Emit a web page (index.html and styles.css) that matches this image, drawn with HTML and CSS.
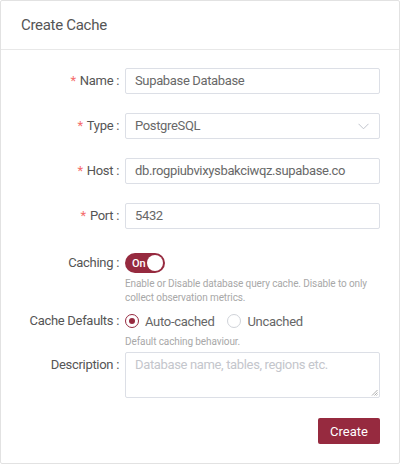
FILE: index.html
```html
<!DOCTYPE html>
<html>
<head>
<meta charset="utf-8">
<link rel="stylesheet" href="styles.css">
</head>
<body>
<div class="card">
  <div class="card-header">Create Cache</div>
  <form class="card-body">
    <div class="row">
      <label class="label"><span class="req">*</span>Name :</label>
      <div class="control"><div class="input">Supabase Database</div></div>
    </div>
    <div class="row">
      <label class="label"><span class="req">*</span>Type :</label>
      <div class="control">
        <div class="input select">PostgreSQL
          <svg class="chev" width="11" height="7" viewBox="0 0 11 7"><path d="M0.5 0.8 L5.5 5.8 L10.5 0.8" fill="none" stroke="#c0c4cc" stroke-width="1"/></svg>
        </div>
      </div>
    </div>
    <div class="row">
      <label class="label"><span class="req">*</span>Host :</label>
      <div class="control"><div class="input">db.rogpiubvixysbakciwqz.supabase.co</div></div>
    </div>
    <div class="row">
      <label class="label"><span class="req">*</span>Port :</label>
      <div class="control"><div class="input">5432</div></div>
    </div>
    <div class="row row-help">
      <label class="label">Caching :</label>
      <div class="control">
        <div class="line">
          <span class="switch"><span class="switch-text">On</span><span class="knob"></span></span>
        </div>
        <div class="help">Enable or Disable database query cache. Disable to only collect observation metrics.</div>
      </div>
    </div>
    <div class="row row-help2">
      <label class="label">Cache Defaults :</label>
      <div class="control">
        <div class="line radios">
          <span class="radio"><span class="dot on"></span>Auto-cached</span>
          <span class="radio"><span class="dot"></span>Uncached</span>
        </div>
        <div class="help">Default caching behaviour.</div>
      </div>
    </div>
    <div class="row row-desc">
      <label class="label">Description :</label>
      <div class="control">
        <div class="textarea">Database name, tables, regions etc.
          <svg class="grip" width="7" height="7" viewBox="0 0 7 7"><path d="M6.5 1 L1 6.5 M6.5 3.5 L3.5 6.5 M6.5 5.5 L5.5 6.5" stroke="#999" stroke-width="0.8"/></svg>
        </div>
      </div>
    </div>
    <div class="actions">
      <button type="button" class="btn">Create</button>
    </div>
  </form>
</div>
</body>
</html>
```
FILE: styles.css
```css
* { box-sizing: border-box; }
html, body { margin: 0; padding: 0; background: #ffffff; }
body {
  font-family: Roboto, "Liberation Sans", sans-serif;
  color: #5c5c5c;
}
.card {
  width: 400px;
  height: 464px;
  border: 1px solid #e2e2e2;
  border-radius: 2px;
  background: #fff;
}
.card-header {
  height: 49px;
  border-bottom: 1px solid #e8e8e8;
  padding-left: 20px;
  display: flex;
  align-items: center;
  font-size: 15px;
  letter-spacing: -0.3px;
  color: #555;
  padding-bottom: 1px;
}
.card-body {
  margin: 0;
  padding: 18px 19px 18px 0;
}
.row {
  display: flex;
  align-items: flex-start;
  margin-bottom: 19px;
}
.label {
  width: 118px;
  flex: none;
  height: 26px;
  line-height: 26px;
  text-align: right;
  font-size: 13px;
  letter-spacing: -0.3px;
  color: #555;
  white-space: nowrap;
}
.req {
  color: #f56c6c;
  margin-right: 4px;
}
.control {
  flex: 1;
  margin-left: 6px;
}
.input {
  position: relative;
  height: 26px;
  border: 1px solid #dcdfe6;
  border-radius: 2px;
  padding: 0 9px;
  line-height: 24px;
  font-size: 13px;
  letter-spacing: -0.35px;
  color: #686868;
  white-space: nowrap;
}
.chev {
  position: absolute;
  right: 10px;
  top: 9px;
}
.row-help { padding-top: 2px; margin-bottom: 3px; }
.line {
  height: 26px;
  display: flex;
  align-items: center;
}
.switch {
  width: 40px;
  height: 20px;
  border-radius: 10px;
  background: #962a3f;
  display: flex;
  align-items: center;
  justify-content: space-between;
  padding: 0 2px 0 7px;
}
.switch-text {
  color: #fff;
  font-size: 11px;
  font-weight: 500;
}
.knob {
  width: 16px;
  height: 16px;
  border-radius: 50%;
  background: #fff;
}
.help {
  font-size: 10px;
  line-height: 14px;
  color: #a8a8a8;
  letter-spacing: -0.1px;
  padding-right: 0;
  margin-top: 1px;
}
.row-help2 { margin-bottom: 3px; }
.radios { gap: 13px; font-size: 13px; letter-spacing: -0.3px; color: #666; }
.radio { display: flex; align-items: center; gap: 6px; }
.dot {
  width: 14px;
  height: 14px;
  border-radius: 50%;
  border: 1px solid #d0d3d9;
  display: flex;
  align-items: center;
  justify-content: center;
}
.dot.on { border-color: #962a3f; }
.dot.on::after {
  content: "";
  width: 6px;
  height: 6px;
  border-radius: 50%;
  background: #962a3f;
}
.row-desc { margin-bottom: 20px; }
.textarea {
  position: relative;
  height: 46px;
  border: 1px solid #dcdfe6;
  border-radius: 2px;
  padding: 2px 9px;
  line-height: 20px;
  font-size: 13px;
  letter-spacing: -0.35px;
  color: #c4c6cc;
}
.grip { position: absolute; right: 1px; bottom: 1px; }
.actions {
  display: flex;
  justify-content: flex-end;
}
.btn {
  width: 62px;
  height: 26px;
  border: none;
  border-radius: 2px;
  background: #962a3f;
  color: #fff;
  font-family: Roboto, "Liberation Sans", sans-serif;
  font-size: 13px;
  padding: 0;
}
```
